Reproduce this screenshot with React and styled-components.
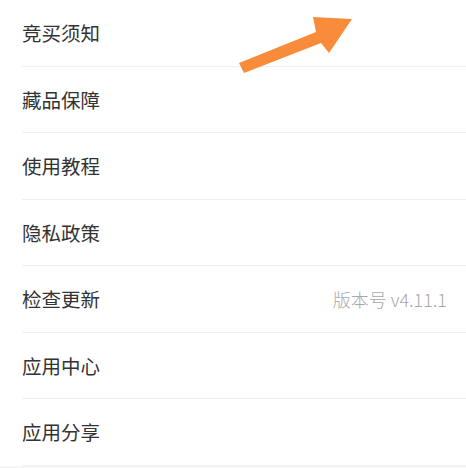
import React from "react";
import styled, { createGlobalStyle } from "styled-components";

const GlobalStyle = createGlobalStyle`
  html, body {
    margin: 0;
    padding: 0;
    background: #f5f5f5;
  }
  body {
    font-family: Roboto, "Noto Sans CJK SC", sans-serif;
  }
`;

const items = [
  { label: "竞买须知" },
  { label: "藏品保障" },
  { label: "使用教程" },
  { label: "隐私政策" },
  { label: "检查更新", extra: "版本号 v4.11.1" },
  { label: "应用中心" },
  { label: "应用分享" },
];

export default function App() {
  return (
    <>
      <GlobalStyle />
      <Page>
        <List>
          {items.map((item) => (
            <Row key={item.label}>
              <Label>{item.label}</Label>
              {item.extra && <Extra>{item.extra}</Extra>}
            </Row>
          ))}
        </List>
        {/* orange pointer drawn over the first row */}
        <Arrow viewBox="0 0 466 80" width="466" height="80">
          <polygon
            points="239,63 316,32 313,17 352,19 329,53 321,43 244,73"
            fill="#f98c3a"
          />
        </Arrow>
      </Page>
    </>
  );
}

const Page = styled.div`
  position: relative;
  width: 466px;
  height: 468px;
  background: #f5f5f5;
  overflow: hidden;
`;

const List = styled.div`
  display: flex;
  flex-direction: column;
  background: #ffffff;
  padding-left: 22px;
`;

const Row = styled.div`
  box-sizing: border-box;
  height: 66.5px;
  display: flex;
  align-items: center;
  justify-content: space-between;
  padding-right: 19px;
  border-bottom: 1px solid #f0f0f0;
`;

const Label = styled.span`
  font-size: 19.5px;
  color: #333333;
`;

const Extra = styled.span`
  font-family: "Noto Sans CJK SC", sans-serif;
  font-size: 18px;
  font-weight: 300;
  color: #a8a8a8;
`;

const Arrow = styled.svg`
  position: absolute;
  left: 0;
  top: 0;
`;
